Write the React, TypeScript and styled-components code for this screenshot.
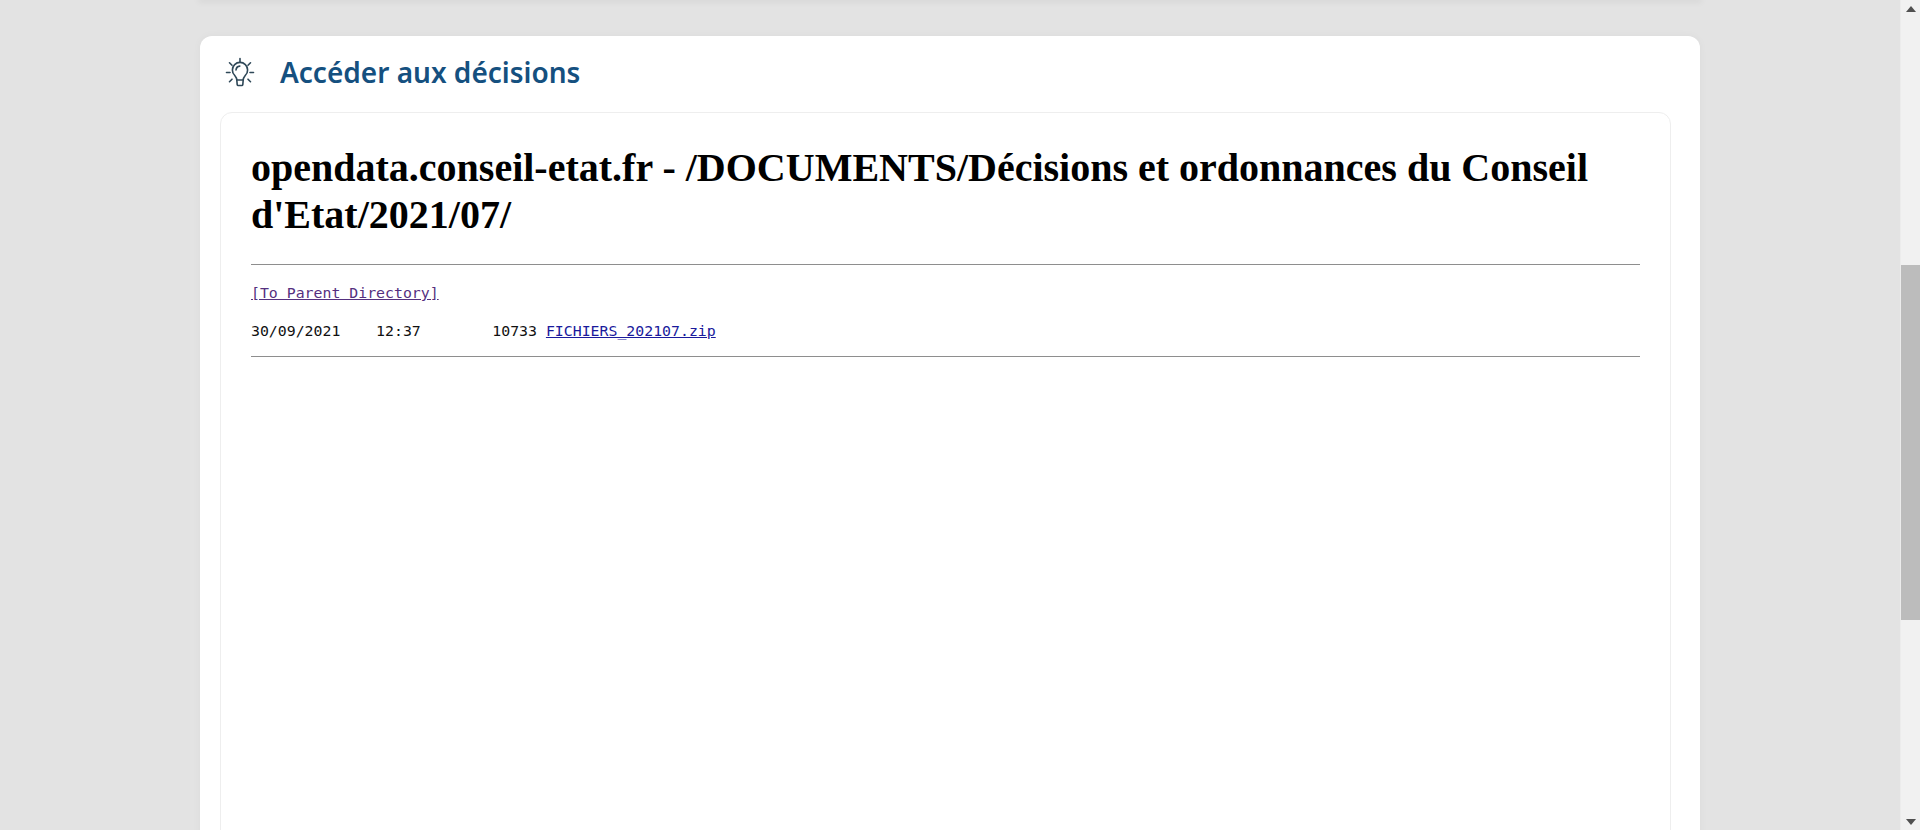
import React from "react";
import styled, { createGlobalStyle } from "styled-components";

const Global = createGlobalStyle`
  html, body { margin: 0; padding: 0; height: 100%; overflow: hidden; background: #e3e3e3; }
`;

const Page = styled.div`
  display: flex;
  width: 1920px;
  height: 830px;
  overflow: hidden;
  background: #e3e3e3;
`;

const Main = styled.main`
  flex: 1;
  min-width: 0;
  padding-left: 200px;
  overflow: hidden;
`;

const PreviousCardEdge = styled.div`
  width: 1500px;
  height: 0;
  box-shadow: 0 0 6px 2px rgba(0, 0, 0, 0.07);
`;

const Card = styled.section`
  width: 1500px;
  height: 900px;
  margin-top: 36px;
  background: #fff;
  border-radius: 12px;
  box-shadow: 0 0 8px rgba(0, 0, 0, 0.04);
  padding: 0 29px 0 20px;
  box-sizing: border-box;
`;

const CardHeader = styled.header`
  display: flex;
  align-items: center;
  gap: 24px;
  height: 72px;
  margin-bottom: 4px;
  padding-left: 4px;
`;

const CardTitle = styled.h2`
  margin: 0;
  font: 600 28px/1 "Noto Sans", sans-serif;
  color: #15507f;
`;

const Frame = styled.div`
  height: 800px;
  border: 1px solid #eee;
  border-radius: 12px;
  padding: 0 30px;
  background: #fff;
`;

const ListingTitle = styled.h1`
  margin: 0;
  padding-top: 31px;
  font: 700 40px/47px "Liberation Serif", serif;
  color: #000;
`;

const Rule = styled.hr<{ $top: number }>`
  margin: ${(p) => p.$top}px 0 0;
  border: 0;
  height: 1px;
  background: #8e8e8e;
`;

const Listing = styled.pre`
  margin: 9px 0 0;
  font: 14.85px/38px "DejaVu Sans Mono", monospace;
  color: #111;
`;

const ListingLink = styled.a<{ $visited?: boolean }>`
  color: ${(p) => (p.$visited ? "#55307f" : "#1a1a9c")};
  text-decoration: underline;
`;

const Scrollbar = styled.aside`
  display: flex;
  flex-direction: column;
  align-items: center;
  width: 19px;
  height: 830px;
  background: #f1f1f1;
  border-left: 1px solid #ececec;
  margin-left: -1px;
`;

const ScrollButton = styled.div`
  display: flex;
  align-items: center;
  justify-content: center;
  height: 17px;
  width: 100%;
`;

const ScrollTrack = styled.div`
  flex: 1;
  width: 100%;
  padding-top: 248px;
  box-sizing: border-box;
`;

const ScrollThumb = styled.div`
  height: 355px;
  background: #bcbcbc;
`;

const BulbIcon = () => (
  <svg width="32" height="32" viewBox="0 0 32 32" fill="none" stroke="#2f4858" strokeWidth="1.6" strokeLinecap="round" strokeLinejoin="round" aria-hidden="true">
    <path d="M16 2.5v3.5M5.5 6.8l2.5 2.5M26.5 6.8 24 9.3M2.5 16.5H6M26 16.5h3.5M8 23.2l-2.5 2.5M24 23.2l2.5 2.5" />
    <path d="M12.8 24c0-2.4-1.1-3.4-2.2-4.7a7.6 7.6 0 1 1 10.8 0c-1.1 1.3-2.2 2.3-2.2 4.7z" />
    <path d="M12.8 24l.4 4.6c.1.6.4.9 1 .9h3.6c.6 0 .9-.3 1-.9l.4-4.6" />
    <path d="M12 14c.2-2.2 1.8-3.7 3.8-3.9" />
  </svg>
);

const Arrow = ({ up }: { up?: boolean }) => (
  <svg width="10" height="6" viewBox="0 0 10 6" aria-hidden="true">
    <path d={up ? "M5 0l5 6H0z" : "M0 0h10L5 6z"} fill="#505050" />
  </svg>
);

export default function App() {
  return (
    <Page>
      <Global />
      <Main>
        <PreviousCardEdge />
        <Card>
          <CardHeader>
            <BulbIcon />
            <CardTitle>Accéder aux décisions</CardTitle>
          </CardHeader>
          <Frame>
            <ListingTitle>
              opendata.conseil-etat.fr - /DOCUMENTS/Décisions et ordonnances du Conseil d'Etat/2021/07/
            </ListingTitle>
            <Rule $top={26} />
            <Listing>
              <ListingLink $visited href="#">[To Parent Directory]</ListingLink>
              {"\n30/09/2021    12:37        10733 "}
              <ListingLink href="#">FICHIERS_202107.zip</ListingLink>
            </Listing>
            <Rule $top={6} />
          </Frame>
        </Card>
      </Main>
      <Scrollbar>
        <ScrollButton><Arrow up /></ScrollButton>
        <ScrollTrack><ScrollThumb /></ScrollTrack>
        <ScrollButton><Arrow /></ScrollButton>
      </Scrollbar>
    </Page>
  );
}
